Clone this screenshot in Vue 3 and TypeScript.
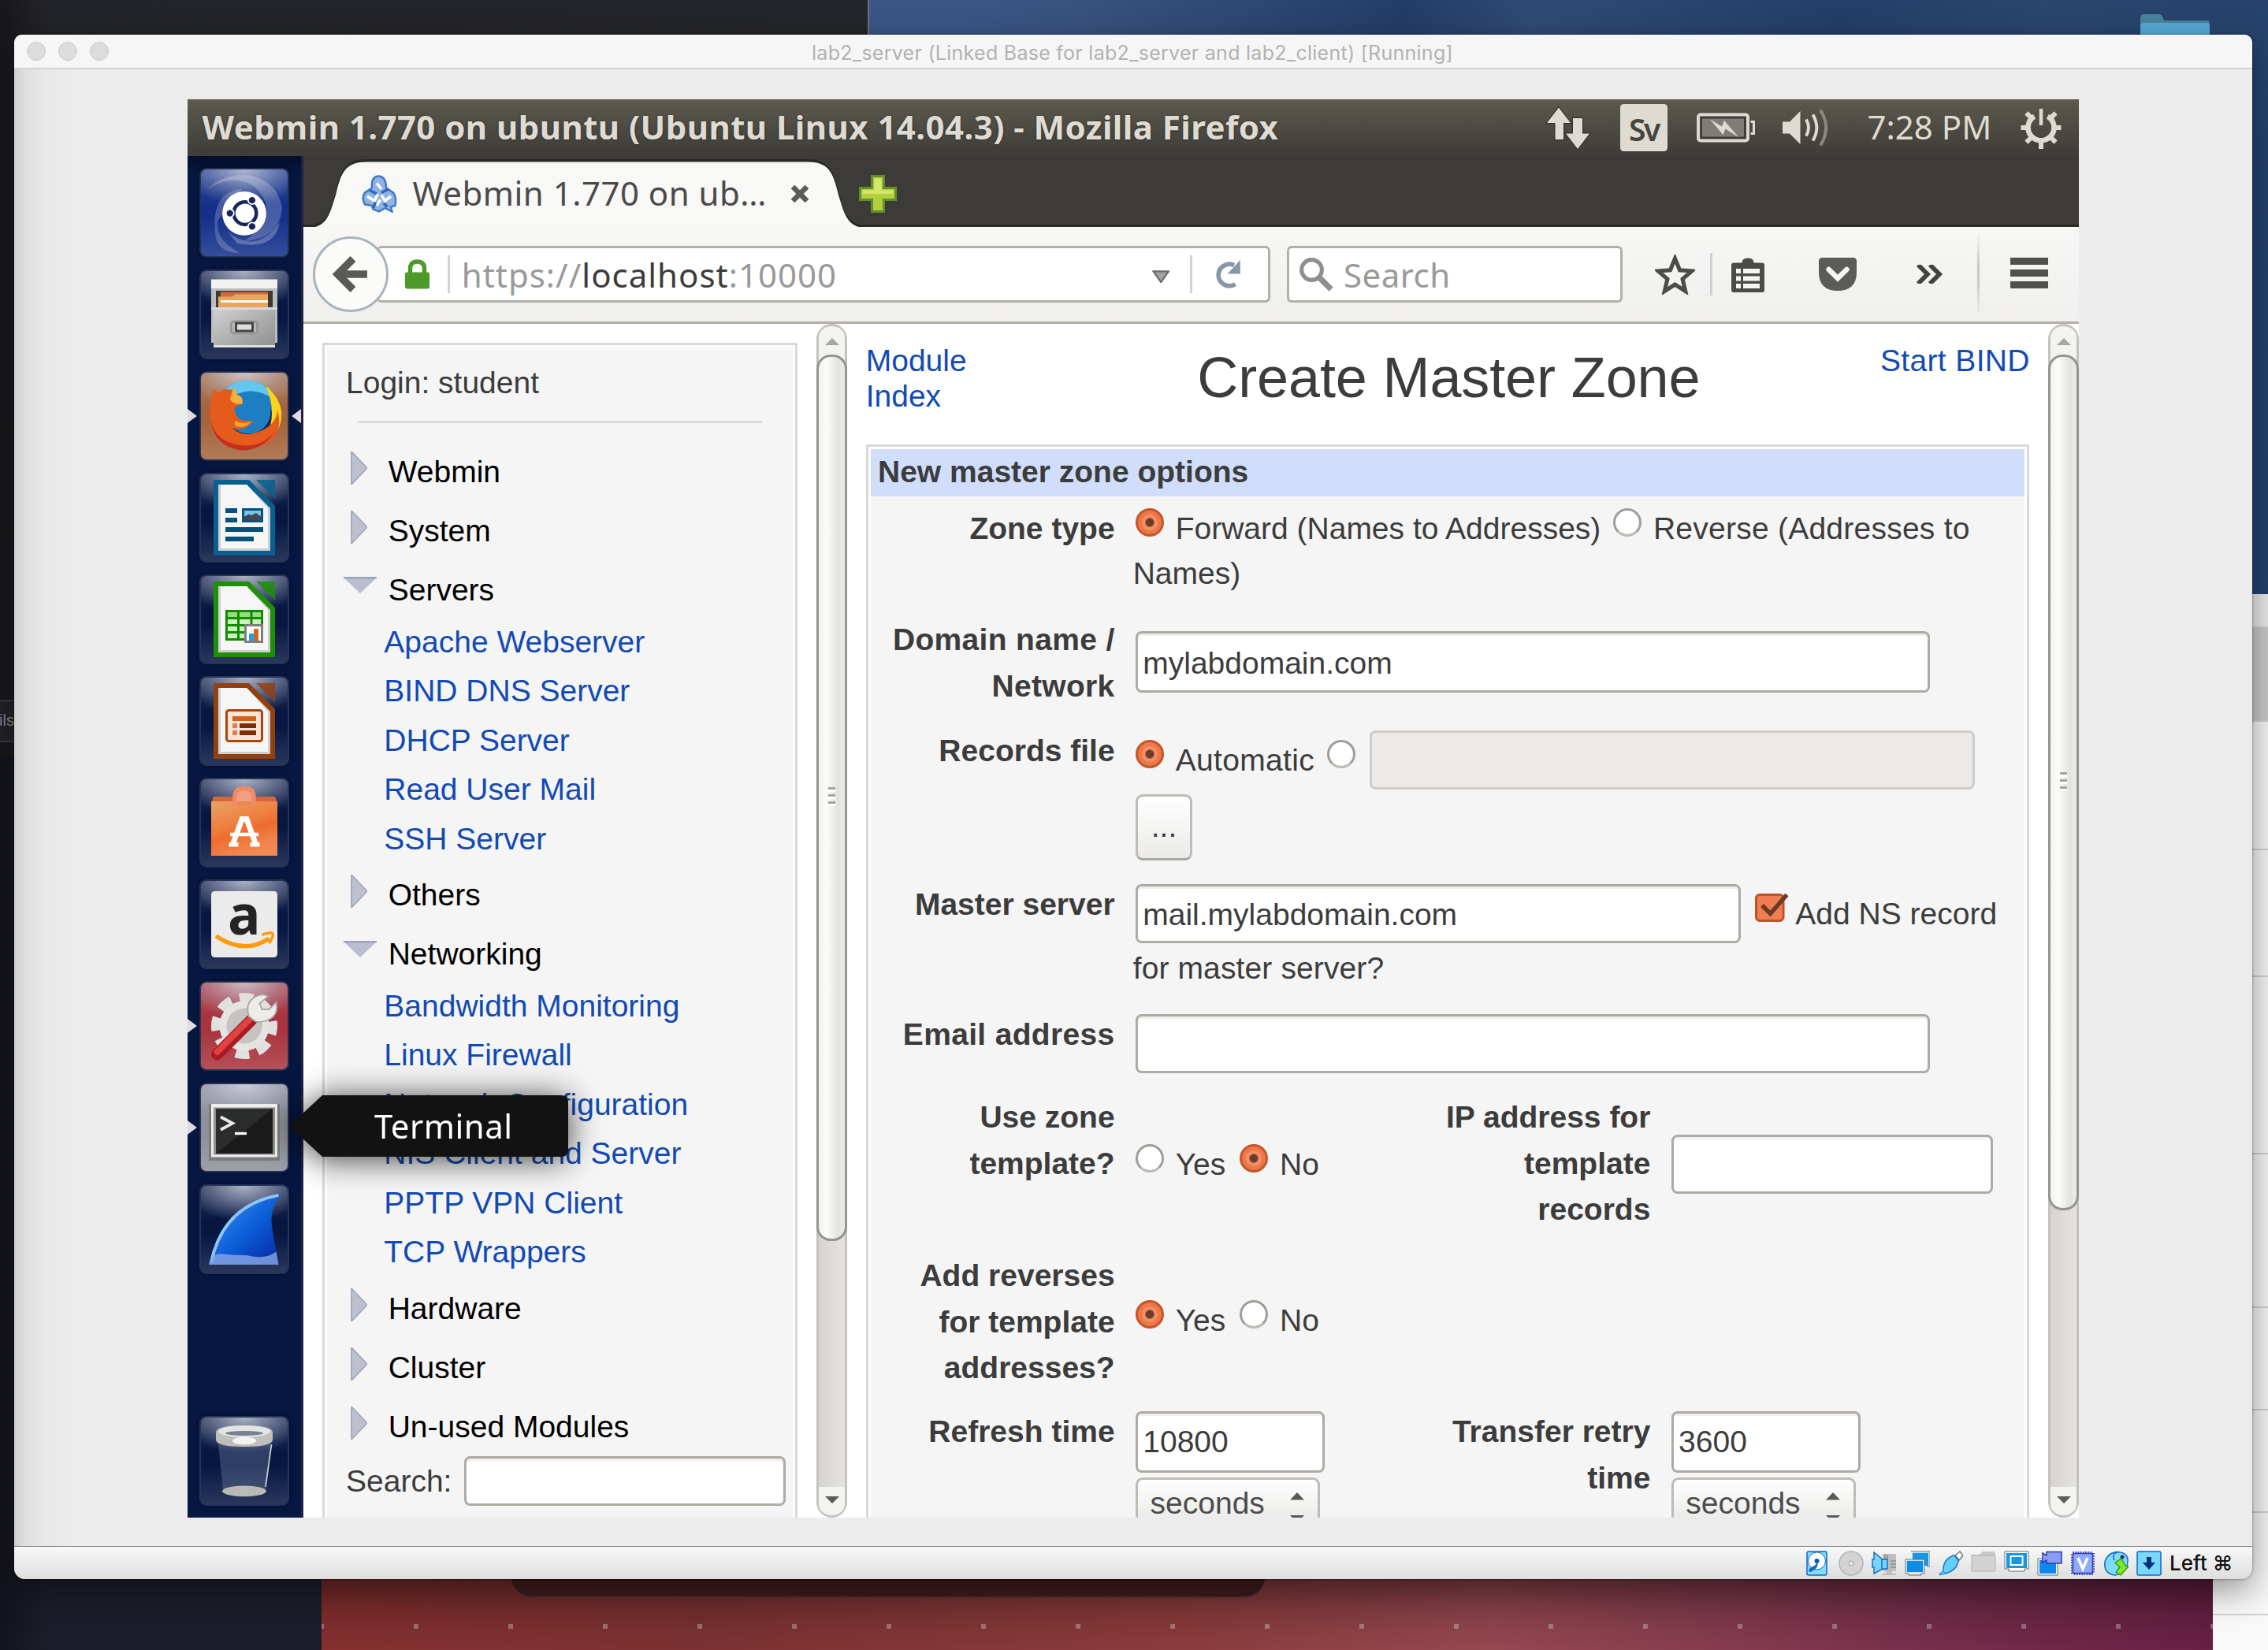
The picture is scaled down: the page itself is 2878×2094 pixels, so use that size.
<script setup lang="ts">
interface Category {
  name: string
  links?: string[]
}

const categories: Category[] = [
  { name: 'Webmin' },
  { name: 'System' },
  {
    name: 'Servers',
    links: ['Apache Webserver', 'BIND DNS Server', 'DHCP Server', 'Read User Mail', 'SSH Server'],
  },
  { name: 'Others' },
  {
    name: 'Networking',
    links: [
      'Bandwidth Monitoring',
      'Linux Firewall',
      'Network Configuration',
      'NIS Client and Server',
      'PPTP VPN Client',
      'TCP Wrappers',
    ],
  },
  { name: 'Hardware' },
  { name: 'Cluster' },
  { name: 'Un-used Modules' },
]

const launchers: { id: string; running?: boolean; focused?: boolean }[] = [
  { id: 'dash' },
  { id: 'files' },
  { id: 'firefox', running: true, focused: true },
  { id: 'writer' },
  { id: 'calc' },
  { id: 'impress' },
  { id: 'software' },
  { id: 'amazon' },
  { id: 'settings', running: true },
  { id: 'terminal', running: true },
  { id: 'wireshark' },
  { id: 'trash' },
]
</script>

<template>
  <div class="desktop">
    <div class="bg-terminal"></div>
    <svg class="folder" viewBox="0 0 90 30" width="90" height="30">
      <path d="M1 30V5q0-5 5-5h18q4 0 5 3l2 5h55q3 0 3 4v18z" fill="#4a829d" />
      <path d="M1 30V15q0-4 4-4h80q4 0 4 4v15z" fill="#54aad6" />
    </svg>
    <div class="side-list">
      <i class="sl-head"></i>
      <i class="sl-sel"></i>
      <i class="sl-row r163"></i>
      <i class="sl-row r161"></i>
      <i class="sl-row r225"></i>
      <i class="sl-row r195"></i>
      <i class="sl-row r130"></i>
      <i class="sl-row r130"></i>
      <i class="sl-row r130"></i>
    </div>
    <div class="left-scrap"><span>ils</span></div>
    <div class="purple">
      <div class="dock"></div>
      <div class="dots"><i v-for="n in 21" :key="n"></i></div>
    </div>

    <div class="window">
      <header class="titlebar">
        <div class="lights"><i></i><i></i><i></i></div>
        <span class="wtitle">lab2_server (Linked Base for lab2_server and lab2_client) [Running]</span>
      </header>

      <main class="stage">
        <div class="vm">
          <div class="panel">
            <span class="ptitle">Webmin 1.770 on ubuntu (Ubuntu Linux 14.04.3) - Mozilla Firefox</span>
            <svg class="p-net" width="20" height="20" viewBox="0 0 20 20">
              <g fill="#dfdbd2" stroke="#33322e" stroke-width=".8" paint-order="stroke">
                <path d="M6 1.5l5 6.5H8v7H4.500V8H1z" />
                <path d="M14 19l5-6.500h-3V6h-4v6.500H9z" />
              </g>
            </svg>
            <span class="p-sv">Sv</span>
            <svg class="p-bat" width="26" height="14" viewBox="0 0 26 14">
              <rect x="1" y="1.500" width="21" height="11" rx="1" fill="#7f7d76" stroke="#dfdbd2" stroke-width="1.300" />
              <rect x="2.200" y="2.700" width="18.600" height="8.600" fill="none" stroke="#3b3a36" stroke-width=".9" />
              <path d="M23.200 4.500h1.300v5h-1.300" fill="none" stroke="#dfdbd2" stroke-width="1" />
              <path d="M6 3.500l5 3 1-2.500 6 7-5.500-3.500-1 2.500z" fill="#dfdbd2" />
            </svg>
            <svg class="p-vol" width="20" height="18" viewBox="0 0 20 18">
              <path d="M0 6.500h3L7.500 2v14L3 11.500H0z" fill="#dfdbd2" />
              <g fill="none" stroke="#dfdbd2" stroke-width="1.300">
                <path d="M10 5.500q2 3.500 0 7" />
                <path d="M12.800 3.500q3.300 5.500 0 11" />
                <path d="M16 1.500q4.800 7.500 0 15" stroke="#8b8880" />
              </g>
            </svg>
            <span class="p-clock">7:28 PM</span>
            <svg class="p-gear" width="18" height="18" viewBox="0 0 18 18">
              <g fill="none" stroke="#dfdbd2">
                <path d="M6.200 4.200a5.500 5.500 0 1 0 5.600 0" stroke-width="2.200" />
                <path d="M9 1v7" stroke-width="1.500" />
                <path d="M9 14.500V18M.5 9H3.500M14.500 9h3M2.800 2.800l2 2M15.200 2.800l-2 2M2.800 15.200l2-2M15.200 15.200l-2-2" stroke-width="2" />
              </g>
            </svg>
          </div>

          <div class="vbody">
            <nav class="launcher">
              <div v-for="l in launchers" :key="l.id" class="slot" :class="l.id">
                <i v-if="l.running" class="run"></i>
                <i v-if="l.focused" class="foc"></i>
                <svg class="app" width="38" height="38" viewBox="0 0 38 38">
                  <g v-if="l.id === 'dash'">
                    <path d="M3 10C10 3 24 3 28 15q2 8-9 16Q34 30 35 17 33 5 20 3 8 3 3 10z" fill="#fff" opacity=".22" />
                    <path d="M7 30Q4 10 18 9L8 22q-2 8 9 14-8 0-10-6z" fill="#fff" opacity=".2" />
                    <path d="M12 27q12 10 22-4-2 12-18 9z" fill="#fff" opacity=".25" />
                    <circle cx="19" cy="19.300" r="9.300" fill="#fff" />
                    <circle cx="19.300" cy="19.200" r="4.800" fill="none" stroke="#16265c" stroke-width="1.500" />
                    <g fill="#16265c" stroke="#fff" stroke-width=".6">
                      <circle cx="12.900" cy="19.200" r="1.700" />
                      <circle cx="22.300" cy="13.700" r="1.700" />
                      <circle cx="22.300" cy="24.800" r="1.700" />
                    </g>
                  </g>
                  <g v-else-if="l.id === 'files'">
                    <path d="M5 4.500h28V31H5z" fill="#bdbdbd" />
                    <path d="M5 4.200h28V8H5z" fill="#f1f1f1" />
                    <path d="M7 9h24v8H7z" fill="#3d3a38" />
                    <path d="M9 9.500h20V17H8.500z" fill="#cf6a3c" />
                    <path d="M8 11.500h6l1-1h14V17H8z" fill="#eba55a" />
                    <path d="M9 13h20v1H9z" fill="#fff" />
                    <path d="M6 16h26v17H6z" fill="url(#steel)" />
                    <path d="M5 16h28v1H5z" fill="#d9d9d9" />
                    <path d="M6 32h26v1H6z" fill="#e0e0e0" />
                    <rect x="13.500" y="22" width="11" height="5" rx="1" fill="#b9b9b9" stroke="#989898" />
                    <rect x="15.500" y="22.700" width="7" height="3.300" fill="#ddd" stroke="#444" stroke-width="1" />
                  </g>
                  <g v-else-if="l.id === 'firefox'">
                    <circle cx="20" cy="17.500" r="13.500" fill="#1d7fc1" />
                    <path d="M8 12Q12 4 20 4t12 8q-8-5-14-3z" fill="#62c8f0" />
                    <path d="M12 20q3 8 12 6 7-3 6-11 4 14-8 15-9 0-10-10z" fill="#10225c" />
                    <path d="M28 6q9 8 6 17-4 10-15 10 9-3 11-10 2-8-2-17z" fill="#fbd51c" />
                    <path d="M6 7.500L8 9q3-2 6-1l2-1q-1 2 0 3 3 1 2 4-4 1-3 3 1 5 8 4-4 5-9 3 4 4 10 2 9-3 9-10 4 15-13 17Q4 32 4.500 18q0-6 1.500-10.500z" fill="#e55b1c" />
                    <path d="M4.600 20q2 11 15 11.500 8 0 12-6-4 8-14 8Q6 32 4.600 20z" fill="#c42f1e" />
                    <path d="M14 8l2-1q-1 2 0 3 3 1 2 4-4 0-5-2z" fill="#f6b03c" />
                    <path d="M15 21q4 2 7 0-3 4-7 2z" fill="#f9a52b" />
                  </g>
                  <g v-else-if="l.id === 'writer' || l.id === 'calc' || l.id === 'impress'">
                    <path class="doc" d="M6 3h15l11 11v21H6z" />
                    <path class="doc" d="M24 3h8v8z" opacity=".85" />
                    <path d="M8 5h12l10 10v18H8z" fill="#cfcfcf" />
                    <path d="M9 5h11l9 10v17H9z" fill="#f6f6f6" />
                    <g v-if="l.id === 'writer'" fill="#05507c">
                      <path d="M11 15h5v2h-5zM11 19h5v2h-5zM11 23h16v2H11zM11 27h12v2H11zM18 15h9v6h-9z" />
                      <path d="M19 16h7v4h-7z" fill="#74c4ec" />
                      <path d="M19 18.500l2-1 1 .5 2-1 2 1.500V20h-7z" fill="#445" />
                    </g>
                    <g v-else-if="l.id === 'calc'">
                      <path d="M11 15h16v13H11z" fill="#148b02" />
                      <path d="M12 16h4v2h-4zM17 16h4.500v2H17zM22.500 16H26v2h-3.500z" fill="#92df80" />
                      <path d="M12 19h4v2h-4zM17 19h4.500v2H17zM22.500 19H26v2h-3.500zM12 22h4v2h-4zM17 22h4v2h-4zM12 25h4v2h-4zM17 25h3v2h-3z" fill="#c8f3bd" />
                      <path d="M19.500 21.500h7v7h-7z" fill="#fff" stroke="#7e7e7e" />
                      <path d="M21 25h2v3h-2z" fill="#21a0ea" />
                      <path d="M23 23h2v5h-2z" fill="#d9651a" />
                    </g>
                    <g v-else>
                      <rect x="11.500" y="14.500" width="15" height="13" rx="1" fill="#fbe3d6" stroke="#a8460b" />
                      <path d="M14 17h10v2H14z" fill="#d0621c" />
                      <path d="M17 20h7v2h-7zM17 23h7v2h-7z" fill="#7d2f04" />
                      <path d="M14 20h2v2h-2zM14 23h2v2h-2z" fill="#dd8149" />
                    </g>
                  </g>
                  <g v-else-if="l.id === 'software'">
                    <path d="M6 8h26l1 3H5z" fill="#d8663b" />
                    <path d="M5 10h28v23H5z" fill="url(#bag)" />
                    <path d="M15 12V8q0-3.500 4-3.500t4 3.500v4" fill="#f0a184" stroke="#ef8a68" stroke-width="1.800" />
                    <path d="M16 10h6v2h-6z" fill="#e98a4f" />
                    <g fill="none" stroke="#fff" stroke-width="2.300">
                      <path d="M14 28.500l4-11h2l4 11" />
                      <path d="M13 24h12" stroke-width="1.500" />
                      <path d="M12.500 28.300h4M21.500 28.300h4" stroke-width="1.800" />
                    </g>
                  </g>
                  <g v-else-if="l.id === 'amazon'">
                    <rect x="5" y="5" width="28" height="28" rx="1.500" fill="#ebebeb" />
                    <path d="M7 24q12 8 22.500 1" fill="none" stroke="#ff9a0c" stroke-width="1.800" />
                    <path d="M26.500 23.500q4-1.500 4.500-.5t-1.500 4" fill="none" stroke="#ff9a0c" stroke-width="1.200" />
                  </g>
                  <g v-else-if="l.id === 'settings'">
                    <circle cx="19" cy="19" r="11.500" fill="none" stroke="#e2e0df" stroke-width="5" stroke-dasharray="5.500 3.530" stroke-dashoffset="2" />
                    <circle cx="19" cy="19" r="8.500" fill="#d5d3d2" stroke="#e6e4e3" stroke-width="4" />
                    <circle cx="19" cy="19" r="7.500" fill="#c6c4c3" />
                    <path d="M7.500 31L22 16.500" stroke="#a81c26" stroke-width="5" stroke-linecap="round" />
                    <path d="M7.500 30L21 16.500" stroke="#e0423f" stroke-width="2.600" stroke-linecap="round" />
                    <path d="M21 15q-2-6 3-8.500 3-1.500 5 0l-3.500 3 1 2.500 3 0 3-3q1 5-2.500 7-4 2-6.500 1z" fill="#eeecea" stroke="#a9a7a5" stroke-width=".6" />
                  </g>
                  <g v-else-if="l.id === 'terminal'">
                    <path d="M4 9h30v24H4z" fill="#7b7b79" />
                    <path d="M5 9h28v22.500H5z" fill="#eeeeed" />
                    <path d="M6 10.500h26v20H6z" fill="#8f8f8f" />
                    <path d="M7 11h24v19H7z" fill="#2b2c2c" />
                    <path d="M31 11v19H7z" fill="#0e0f0f" opacity=".55" />
                    <path d="M9 14.500l5 2.700-5 2.700" fill="none" stroke="#e8e8e8" stroke-width="1.300" />
                    <path d="M15 21.500h5" stroke="#fff" stroke-width="1.100" />
                  </g>
                  <g v-else-if="l.id === 'wireshark'">
                    <path d="M35 4q-6 6-4 16l2.500 14H4Q10 8 35 4z" fill="url(#fin)" />
                    <path d="M33.500 4.600Q10 9 5 33" fill="none" stroke="#8fc4fa" stroke-width="1.300" />
                    <path d="M4 34q1-5 6-4.500t10 .5q8 2 12.500-1.500l1 5.500z" fill="#87a8e6" opacity=".8" />
                  </g>
                  <g v-else>
                    <path d="M8 12l2 19q9 4 18 0l2.500-19z" fill="#8e9bb8" opacity=".3" />
                    <path d="M30.500 12L28 30" stroke="#c6cbd6" stroke-width=".6" />
                    <ellipse cx="19" cy="31.800" rx="9.300" ry="2.300" fill="#b9bab6" />
                    <path d="M7 7v3q0 3 12 3t12-3V7q0-3-12-3T7 7z" fill="#bfc0be" />
                    <ellipse cx="19" cy="6.500" rx="11" ry="2.500" fill="#e4e5e2" />
                    <ellipse cx="19" cy="7.300" rx="8" ry="1" fill="#76828f" />
                    <ellipse cx="19" cy="10.500" rx="5" ry="1.600" fill="#f4f4f2" />
                  </g>
                </svg>
                <b v-if="l.id === 'amazon'" class="a-letter">a</b>
              </div>
              <svg class="defs" width="0" height="0">
                <linearGradient id="steel" x1="0" y1="0" x2="1" y2="1">
                  <stop offset="0" stop-color="#d2d2d2" />
                  <stop offset="1" stop-color="#8e8e8e" />
                </linearGradient>
                <linearGradient id="bag" x1="0" y1="0" x2=".4" y2="1">
                  <stop offset="0" stop-color="#e9a366" />
                  <stop offset=".5" stop-color="#ef7c3d" />
                  <stop offset=".65" stop-color="#ef6c2f" />
                  <stop offset="1" stop-color="#f38850" />
                </linearGradient>
                <linearGradient id="fin" x1="0" y1="0" x2="1" y2="1">
                  <stop offset=".2" stop-color="#2f86ea" />
                  <stop offset=".55" stop-color="#0b5ad6" />
                  <stop offset="1" stop-color="#04249a" />
                </linearGradient>
              </svg>
            </nav>

            <section class="browser">
              <div class="tabs">
                <div class="tab">
                  <svg class="tabshape" width="238" height="30" viewBox="0 0 238 30">
                    <path d="M0 30C9 30 10 25 12.500 16 15 6 17 2 26 2H212C221 2 223 6 225.500 16 228 25 229 30 238 30z" fill="#2a2926" transform="translate(0,-.7)" />
                    <path d="M0 30.500C9 30.500 10 25 12.800 16 15 6.500 17 2.500 26 2.500H212C221 2.500 223 6.500 225.200 16 228 25 229 30.500 238 30.500z" fill="#f8f8f7" />
                  </svg>
                  <svg class="fav" width="16" height="16" viewBox="0 0 16 16">
                    <path d="M5 5.500Q4.500 1 7.500.5q3.500 0 3.500 5l3 2q1.500 2 .8 5.500l-1.800.5.5 2-3-1.500-2.500 1.500-2.500-1-.5-1.500-3-.5Q.5 9.500 2 7.500z" fill="#8fb4e4" stroke="#3f76c6" stroke-width=".8" />
                    <g fill="none" stroke="#fff" stroke-width="1.200">
                      <path d="M7 3.500l2 2.500M3 9l3 2 1.500-3M9 8.500l1.500 2.500 2.500-2M7 13l1.500-2.500" />
                    </g>
                    <path d="M4 6.500l3 1.500M9 7.500l3-1.500M6.500 11.500l-1 2.500M10 12l1.500 1.500" stroke="#3066ba" stroke-width="1.200" />
                  </svg>
                  <span class="ttext">Webmin 1.770 on ub…</span>
                  <svg class="tclose" width="8" height="8" viewBox="0 0 8 8"><path d="M1 1l6 6M7 1L1 7" stroke="#5b5b59" stroke-width="2.200" /></svg>
                </div>
                <svg class="plus" width="16" height="16" viewBox="0 0 16 16">
                  <path d="M5.500.5h5v5h5v5h-5v5h-5v-5h-5v-5h5z" fill="#b3cf3d" stroke="#628f2b" />
                  <path d="M6.500 1.500h3v5h5v1.500h-13V6.500h5z" fill="#d8e56c" />
                </svg>
              </div>

              <div class="navbar">
                <div class="back">
                  <svg width="16" height="16" viewBox="0 0 16 16"><path d="M15 8H4M9 1.500L2.500 8 9 14.500" fill="none" stroke="#5a5a58" stroke-width="3.200" /></svg>
                </div>
                <div class="url">
                  <svg class="lock" width="11" height="13" viewBox="0 0 11 13">
                    <path d="M2.500 6V4q0-3 3-3t3 3v2" fill="none" stroke="#4c9a2a" stroke-width="1.800" />
                    <rect x=".3" y="5.500" width="10.400" height="7" rx=".8" fill="#4c9a2a" />
                  </svg>
                  <i class="vsep"></i>
                  <span class="utext">https://<em>localhost</em>:10000</span>
                  <svg class="drop" width="7.500" height="5.500" viewBox="0 0 8 6"><path d="M.5.500h7L4 5.500z" fill="#a2a2a0" stroke="#6a6a68" stroke-width=".8" /></svg>
                  <i class="vsep"></i>
                  <svg class="reload" width="12" height="12" viewBox="0 0 12 12">
                    <path d="M9.500 10.200A4.600 4.600 0 1 1 9 2.200" fill="none" stroke="#8797a6" stroke-width="1.900" />
                    <path d="M11.600 0v5.800H6.200z" fill="#8797a6" />
                  </svg>
                </div>
                <div class="sbox">
                  <svg width="15" height="15" viewBox="0 0 15 15"><circle cx="5.500" cy="5.500" r="4.300" fill="none" stroke="#8f8f8d" stroke-width="1.700" /><path d="M8.700 8.700l5 5" stroke="#8f8f8d" stroke-width="2.400" /></svg>
                  <span>Search</span>
                </div>
                <svg class="n-star" width="17" height="17" viewBox="0 0 17 17"><path d="M8.500 1.700l2 4.900 5.100.4-3.900 3.400 1.200 5.100-4.400-2.800-4.400 2.800 1.200-5.100L1.400 7l5.100-.4z" fill="none" stroke="#4b4b49" stroke-width="1.700" /></svg>
                <i class="vsep n-s1"></i>
                <svg class="n-clip" width="14" height="15" viewBox="0 0 14 15">
                  <path d="M0 3.500q0-1 1-1h3.500q0-2 2.500-2t2.500 2H13q1 0 1 1V14q0 1-1 1H1q-1 0-1-1z" fill="#4b4b49" />
                  <path d="M2 5h2v2H2zM5 5h7v2H5zM2 8.200h2v2H2zM5 8.200h7v2H5zM2 11.300h2v2H2zM5 11.300h7v2H5z" fill="#f6f6f5" />
                </svg>
                <svg class="n-pocket" width="16" height="14" viewBox="0 0 16 14">
                  <path d="M0 1.500Q0 0 1.500 0h13Q16 0 16 1.500V6q0 8-8 8T0 6z" fill="#5b5b59" />
                  <path d="M4.200 5L8 8.700 11.800 5" fill="none" stroke="#f6f6f5" stroke-width="2.200" stroke-linecap="round" />
                </svg>
                <svg class="n-more" width="12" height="8" viewBox="0 0 12 8"><path d="M1 0l4 4-4 4M6 0l4 4-4 4" fill="none" stroke="#424240" stroke-width="1.900" /></svg>
                <i class="n-s2"></i>
                <svg class="n-menu" width="16" height="13" viewBox="0 0 16 13"><path d="M0 1.500h16M0 6.500h16M0 11.500h16" stroke="#4f4f4d" stroke-width="3" /></svg>
              </div>

              <div class="frames">
                <aside class="left">
                  <div class="lbox">
                    <div class="login">Login: student</div>
                    <hr />
                    <template v-for="c in categories" :key="c.name">
                      <div class="cat">
                        <svg v-if="c.links" class="down" width="14" height="7" viewBox="0 0 14 7"><path d="M0 .3h14L7 7z" fill="#b9bdcd" /><path d="M0 .4h14" stroke="#9298b0" stroke-width=".7" /></svg>
                        <svg v-else class="right" width="7" height="14" viewBox="0 0 7 14"><path d="M.3 0v14L7 7z" fill="#bdc0ce" stroke="#9ca2ba" stroke-width=".5" /></svg>
                        <span>{{ c.name }}</span>
                      </div>
                      <ul v-if="c.links" class="links">
                        <li v-for="k in c.links" :key="k">{{ k }}</li>
                      </ul>
                    </template>
                    <div class="find"><span>Search:</span><div class="field"></div></div>
                  </div>
                </aside>
                <div class="sb sb-left">
                  <div class="sbtn"><svg width="6" height="3" viewBox="0 0 6 3"><path d="M0 3h6L3 0z" fill="#a9a7a3" /></svg></div>
                  <div class="thumb"><i></i><i></i><i></i></div>
                  <div class="sbtn low"><svg width="6" height="3" viewBox="0 0 6 3"><path d="M0 0h6L3 3z" fill="#5c5b58" /></svg></div>
                </div>

                <article class="main">
                  <div class="head">
                    <div class="mi">Module<br />Index</div>
                    <h1>Create Master Zone</h1>
                    <div class="sbind">Start BIND</div>
                  </div>
                  <div class="form">
                    <div class="fhead">New master zone options</div>
                    <div class="frow h47">
                      <label>Zone type</label>
                      <div class="val">
                        <div class="ln"><i class="radio on"></i><span>Forward (Names to Addresses)</span><i class="radio nx"></i><span class="rev">Reverse (Addresses to</span></div>
                        <div class="under">Names)</div>
                      </div>
                    </div>
                    <div class="frow h47">
                      <label class="wide">Domain name /<br />Network</label>
                      <div class="val"><div class="field dom">mylabdomain.com</div></div>
                    </div>
                    <div class="frow h65">
                      <label>Records file</label>
                      <div class="val">
                        <div class="ln d4"><i class="radio on"></i><span class="auto">Automatic</span><i class="radio nx"></i><div class="field dis"></div></div>
                        <div class="btn">...</div>
                      </div>
                    </div>
                    <div class="frow h55">
                      <label>Master server</label>
                      <div class="val">
                        <div class="ln d4">
                          <div class="field mas">mail.mylabdomain.com</div>
                          <svg class="check" width="15" height="14" viewBox="0 0 15 14">
                            <rect x=".5" y="1.500" width="11.500" height="11" rx="1.500" fill="#f07e50" stroke="#c05228" />
                            <path d="M3 6l3.500 3.500L13.500 1.500" fill="none" stroke="#6d3a28" stroke-width="1.800" />
                          </svg>
                          <span class="ns">Add NS record</span>
                        </div>
                        <div class="under m2">for master server?</div>
                      </div>
                    </div>
                    <div class="frow h35">
                      <label class="wide">Email address</label>
                      <div class="val"><div class="field mail"></div></div>
                    </div>
                    <div class="frow h67">
                      <label>Use zone<br />template?</label>
                      <div class="val half"><div class="ln d20"><i class="radio"></i><span>Yes</span><i class="radio on nx"></i><span>No</span></div></div>
                      <label class="l2">IP address for<br />template<br />records</label>
                      <div class="val"><div class="field ip"></div></div>
                    </div>
                    <div class="frow h66">
                      <label>Add reverses<br />for template<br />addresses?</label>
                      <div class="val half"><div class="ln d19"><i class="radio on"></i><span>Yes</span><i class="radio nx"></i><span>No</span></div></div>
                    </div>
                    <div class="frow h66">
                      <label>Refresh time</label>
                      <div class="val half">
                        <div class="field num">10800</div>
                        <div class="select"><span>seconds</span><svg width="6" height="14" viewBox="0 0 6 14"><path d="M0 3.500h6L3 .3zM0 10h6L3 13.200z" fill="#5a5956" /></svg></div>
                      </div>
                      <label class="l2">Transfer retry<br />time</label>
                      <div class="val">
                        <div class="field num">3600</div>
                        <div class="select"><span>seconds</span><svg width="6" height="14" viewBox="0 0 6 14"><path d="M0 3.500h6L3 .3zM0 10h6L3 13.200z" fill="#5a5956" /></svg></div>
                      </div>
                    </div>
                  </div>
                </article>
                <div class="sb sb-right">
                  <div class="sbtn"><svg width="6" height="3" viewBox="0 0 6 3"><path d="M0 3h6L3 0z" fill="#a9a7a3" /></svg></div>
                  <div class="thumb"><i></i><i></i><i></i></div>
                  <div class="sbtn low"><svg width="6" height="3" viewBox="0 0 6 3"><path d="M0 0h6L3 3z" fill="#5c5b58" /></svg></div>
                </div>
              </div>
            </section>
          </div>

          <div class="tip">
            <svg width="118" height="26" viewBox="0 0 118 26"><path d="M0 13L14 0H115q3 0 3 3v20q0 3-3 3H14z" fill="#121212" /></svg>
            <span>Terminal</span>
          </div>
        </div>
      </main>

      <footer class="status">
        <svg width="32" height="32" viewBox="0 0 32 32">
          <rect x="2" y="1" width="25" height="30" rx="2" fill="#7fdcfb" stroke="#1666c8" stroke-width="1.500" />
          <circle cx="14.500" cy="13" r="11" fill="#fff" stroke="#1666c8" /><circle cx="14.500" cy="13" r="3" fill="#0a56b8" />
          <path d="M15 14q3 8-9 13-3-1-1-4 5-4 7-4z" fill="#1463c4" />
        </svg>
        <svg width="32" height="32" viewBox="0 0 32 32"><circle cx="16" cy="16" r="15" fill="#d3d3d3" stroke="#b4b4b4" stroke-width="1.500" /><circle cx="16" cy="16" r="3" fill="#e8e8e8" stroke="#a2a2a2" /></svg>
        <svg width="32" height="32" viewBox="0 0 32 32">
          <path d="M14 4h15q2 0 2 2v18q0 2-2 2h-3v3h5v2H13v-2h6v-3h-5z" fill="#bdbdbd" />
          <path d="M17 5v6M20 5v6M24 13h7M24 17h7M24 21h7" stroke="#8d8d8d" stroke-width="1.500" />
          <path d="M3 2l11 9h6v12h-6L3 29V21H1V11h2z" fill="#79d6fa" stroke="#1b6cc9" stroke-width="1.500" /><path d="M13 11v12" stroke="#1b6cc9" stroke-width="1.500" />
        </svg>
        <svg width="32" height="32" viewBox="0 0 32 32">
          <g stroke="#fff" stroke-width="1.500"><path d="M9 2h22v18H9z" fill="#1597e6" /><path d="M2 12h22v16H2z" fill="#0e8be8" /></g>
          <path d="M8 1h24v19h-4M1 11h24v18h-4v2H5v-2H1z" fill="none" stroke="#6b6b6b" />
        </svg>
        <svg width="32" height="32" viewBox="0 0 32 32">
          <path d="M22 6l6-5 4 5-5 6z" fill="#fff" stroke="#777" stroke-width="1.500" />
          <path d="M18 7q2-2 4 0l4 5q1 2-1 4-2 9-15 13l-3-2Q6 12 18 7z" fill="#62d0fb" stroke="#1b73cc" stroke-width="1.500" /><path d="M7 26l-5 3 1 2 6-2" fill="#62d0fb" stroke="#1b73cc" />
        </svg>
        <svg width="32" height="32" viewBox="0 0 32 32"><path d="M1 5h10l4-4h14l2 2v22H1z" fill="#c7c7c7" /><path d="M1 6h30v20H1z" fill="#d3d3d3" stroke="#b1b1b1" /></svg>
        <svg width="32" height="32" viewBox="0 0 32 32">
          <path d="M1 1h30v22h-5v3H6v-3H1z" fill="#fff" stroke="#6b6b6b" /><path d="M3 3h26v19H3z" fill="#1597e6" /><path d="M8.500 7h15v11h-15z" fill="#1597e6" stroke="#fff" stroke-width="2" />
        </svg>
        <svg width="32" height="32" viewBox="0 0 32 32">
          <path d="M1 10h25v21H1z" fill="#fff" stroke="#6b6b6b" /><path d="M3 12h21v17H3z" fill="#0d87ee" />
          <path d="M7 3l5 3V1.500h19V16H12v-4l-5 3z" fill="#8a9bf3" stroke="#2c3fae" stroke-width="1.500" />
        </svg>
        <svg width="32" height="32" viewBox="0 0 32 32">
          <rect x="3" y="3" width="26" height="26" fill="none" stroke="#2d3fb8" stroke-width="4" stroke-dasharray="1.600 1.650" />
          <rect x="3.500" y="3.500" width="25" height="25" rx="2" fill="#8fa9fb" stroke="#2d3fb8" stroke-width="1.500" />
          <path d="M10 9l6 14 6-14" fill="none" stroke="#fff" stroke-width="3.500" />
        </svg>
        <svg width="32" height="32" viewBox="0 0 32 32">
          <path d="M2 14Q6 2 18 1.500q14 1 13 12-1 16-16 17.500Q0 29 2 14z" fill="#7ddcfb" stroke="#1b6cc9" stroke-width="1.500" />
          <path d="M14 12q-4-8 4-10" fill="none" stroke="#1b6cc9" stroke-width="1.500" /><circle cx="24" cy="8" r="2.500" fill="#0a2d6c" />
          <path d="M15 15l8-5 5 9 4 1-10 11-6-4 5-6z" fill="#7bea22" stroke="#38930d" stroke-width="1.300" />
        </svg>
        <svg width="32" height="32" viewBox="0 0 32 32"><rect x="1" y="1" width="30" height="30" rx="2" fill="#79d8fb" stroke="#1666c8" stroke-width="1.500" /><path d="M13 8h6v7h5l-8 9-8-9h5z" fill="#062f7c" /></svg>
        <span class="host">Left ⌘</span>
      </footer>
    </div>
  </div>
</template>

<style>
body {
  overflow: hidden;
  background: #1b1d2a;
}
</style>

<style scoped>
.desktop {
  position: relative;
  width: 2878px;
  height: 2094px;
  overflow: hidden;
  background: linear-gradient(100deg, #3a5586 38%, #39527f 42%, #243d68 55%, #304a75 60%, #243e69 72%, #2b456e 80%, #22416c 95%, #2c4363);
}
.bg-terminal {
  position: absolute;
  left: 0;
  top: 0;
  width: 1101px;
  height: 2094px;
  background: linear-gradient(90deg, #17171a, #232429 60px, #25262b);
  border-right: 2px solid #6c7079;
}
.bg-terminal::after {
  content: '';
  position: absolute;
  left: 0;
  top: 960px;
  width: 408px;
  height: 1134px;
  background: linear-gradient(90deg, #12131c, #1b1d2a 60px);
}
.folder { position: absolute; left: 2715px; top: 18px; }
.side-list {
  position: absolute;
  right: 0;
  top: 754px;
  width: 70px;
  height: 1340px;
  display: flex;
  flex-direction: column;
  background: #f8f8f8;
}
.side-list i { display: block; flex: none; box-sizing: border-box; border-bottom: 2px solid #d2d2d2; }
.sl-head { height: 43px; background: #ececec; }
.sl-sel { height: 119px; background: #cbcbcb; }
.r163 { height: 163px; }
.r161 { height: 161px; }
.r225 { height: 225px; }
.r195 { height: 195px; }
.r130 { height: 130px; }
.left-scrap {
  position: absolute;
  left: 0;
  top: 888px;
  width: 18px;
  height: 50px;
  background: #222327;
  border-top: 2px solid #3a3b3f;
  border-bottom: 2px solid #3a3b3f;
  overflow: hidden;
  font: 20px/48px 'Liberation Sans', sans-serif;
  color: #85868a;
}
.left-scrap span { margin-left: -1px; }
.purple {
  position: absolute;
  left: 408px;
  top: 1980px;
  width: 2400px;
  height: 114px;
  overflow: hidden;
  background: linear-gradient(90deg, #86302f, #7c3232 20%, #8b3c3b 45%, #954850 62%, #853b50 75%, #732b49 88%, #682044);
}
.purple::after {
  content: '';
  position: absolute;
  inset: 0;
  background: linear-gradient(180deg, rgba(0, 0, 0, 0.22) 20%, transparent);
}
.dock {
  position: absolute;
  left: 241px;
  top: 0;
  width: 956px;
  height: 48px;
  border-radius: 0 0 26px 26px;
  background: #4a2022;
  border-bottom: 2px solid #6a3a3b;
  box-sizing: border-box;
}
.dots {
  position: absolute;
  left: -3px;
  top: 81px;
  display: flex;
  gap: 114px;
}
.dots i { width: 6px; height: 6px; flex: none; background: rgba(255, 255, 255, 0.32); }

.window {
  position: absolute;
  left: 18px;
  top: 44px;
  width: 2840px;
  height: 1960px;
  border-radius: 10px 10px 14px 14px;
  overflow: hidden;
  display: flex;
  flex-direction: column;
  background: #ececec;
  box-shadow: 0 0 3px rgba(0, 0, 0, 0.5), 0 14px 44px rgba(0, 0, 0, 0.42);
}
.titlebar {
  height: 44px;
  box-sizing: border-box;
  flex: none;
  display: flex;
  align-items: center;
  background: #f6f6f6;
  border-bottom: 2px solid #d3d3d3;
}
.lights { display: flex; gap: 16px; margin-left: 16px; width: 104px; }
.lights i { width: 24px; height: 24px; box-sizing: border-box; border-radius: 50%; background: #dcdcdc; border: 1px solid #cbcbcb; }
.wtitle {
  margin: 3px 0 0 892px;
  font: 25px/40px Inter, 'Liberation Sans', sans-serif;
  letter-spacing: 0.270px;
  color: #b2b2b2;
  white-space: nowrap;
}
.stage {
  flex: none;
  height: 1874px;
  box-sizing: border-box;
  padding: 38px 0 0 220px;
  background: linear-gradient(90deg, #d0d0d0, #e0e0e0 16px, #e9e9e9 40px, #ececec 80px);
}
.status {
  height: 42px;
  flex: none;
  box-sizing: border-box;
  display: flex;
  align-items: center;
  justify-content: flex-end;
  gap: 10px;
  padding-right: 25px;
  border-top: 1px solid #7f7f7f;
  background: linear-gradient(180deg, #f8f8f8, #dedede);
}
.status svg { flex: none; }
.host {
  width: 80px;
  font: 500 26px/40px Inter, 'DejaVu Sans', sans-serif;
  color: #111;
  white-space: nowrap;
}

.vm {
  position: relative;
  zoom: 3;
  width: 800px;
  height: 600px;
  overflow: hidden;
  display: flex;
  flex-direction: column;
  font: 13px/19.5px 'Liberation Sans', Arial, sans-serif;
  color: #3c3c3c;
  background: #fff;
}
.vm svg { display: block; flex: none; }
.panel {
  height: 24px;
  flex: none;
  display: flex;
  align-items: center;
  background: linear-gradient(180deg, #65625a 0, #5b584d 1px, #3d3c38);
  color: #dfdbd2;
  font: 14px/24px 'Noto Sans', sans-serif;
  white-space: nowrap;
}
.ptitle { width: 568px; box-sizing: border-box; padding-left: 6.200px; margin-top: -0.700px; font-weight: 700; flex: none; letter-spacing: 0.145px; text-shadow: 0 0 1px #2c2b28; }
.p-net { margin-left: 6px; }
.p-sv {
  width: 20px;
  height: 20px;
  flex: none;
  margin-left: 12px;
  border-radius: 1.5px;
  background: #dfdbd2;
  color: #454440;
  text-align: center;
  font: 600 13px/21px 'Noto Sans', sans-serif;
  letter-spacing: -0.800px;
}
.p-bat { margin-left: 12px; }
.p-vol { margin-left: 10.500px; }
.p-clock { margin-left: 16px; width: 64.500px; margin-top: -0.500px; }
.vbody { display: flex; flex: none; height: 576px; }

.launcher {
  width: 49px;
  height: 576px;
  box-sizing: border-box;
  flex: none;
  display: flex;
  flex-direction: column;
  gap: 5px;
  padding: 5px 0 0 5px;
  border-right: 1px solid #232045;
  background: linear-gradient(180deg, #040e2b, #071742 8px);
}
.slot {
  position: relative;
  width: 38px;
  height: 38px;
  box-sizing: border-box;
  flex: none;
  border: 0.700px solid rgba(190, 196, 215, 0.16);
  border-radius: 3px;
  background:
    radial-gradient(ellipse 26px 15px at 50% 0, rgba(214, 218, 230, 0.75), rgba(180, 186, 205, 0.35) 60%, transparent) padding-box,
    linear-gradient(180deg, rgba(255, 255, 255, 0.14), rgba(255, 255, 255, 0) 40%, rgba(255, 255, 255, 0) 55%, rgba(255, 255, 255, 0.14)) padding-box;
  background-clip: padding-box;
  box-shadow: 0 0 2px rgba(0, 0, 0, 0.4);
}
.slot .app { margin: -0.700px; }
.slot.dash { background-color: #14308a; }
.slot.firefox { background-color: #a4653c; }
.slot.settings { background-color: #a8343e; }
.slot.terminal { background-color: #8d8f9a; }
.slot.trash { margin-top: 55px; }
.slot.writer .doc { fill: #07608f; }
.slot.calc .doc { fill: #1c9006; }
.slot.impress .doc { fill: #93400e; }
.a-letter {
  position: absolute;
  left: -0.700px;
  width: 38px;
  top: -1.200px;
  text-align: center;
  font: 700 23px/30px 'Open Sans', 'Noto Sans', sans-serif;
  color: #242424;
}
.run, .foc { position: absolute; top: 15.300px; width: 4px; height: 6px; background: #dcdce2; }
.run { left: -5.700px; clip-path: polygon(0 0, 100% 50%, 0 100%); }
.foc { right: -5.700px; clip-path: polygon(100% 0, 0 50%, 100% 100%); }
.defs { position: absolute; }

.browser { flex: none; width: 751px; display: flex; flex-direction: column; }
.tabs {
  height: 30px;
  flex: none;
  display: flex;
  align-items: center;
  background: #3c3b37;
  box-shadow: inset 0 -1px 0 #2a2926;
}
.tab {
  position: relative;
  width: 238px;
  height: 30px;
  margin-left: 1px;
  display: flex;
  align-items: center;
  flex: none;
  font: 14px/30px 'Noto Sans', sans-serif;
  white-space: nowrap;
}
.tabshape { position: absolute; left: 0; top: 0; }
.fav, .ttext, .tclose { position: relative; }
.fav { margin-left: 23px; margin-top: 2px; }
.ttext { margin-left: 6.200px; width: 159.800px; margin-top: 1.400px; letter-spacing: 0.160px; color: #4a4a48; }
.tclose { margin-left: 0; margin-top: 2px; }
.plus { margin: 2px 0 0 -4px; }
.navbar {
  height: 41px;
  box-sizing: border-box;
  flex: none;
  display: flex;
  align-items: center;
  border-bottom: 1px solid #b3b0aa;
  background: linear-gradient(180deg, #f7f7f6, #f0efee);
  font: 14px/22px 'Noto Sans', sans-serif;
}
.back {
  width: 32px;
  height: 32px;
  box-sizing: border-box;
  margin-left: 4px;
  border-radius: 50%;
  border: 1px solid #aab4bd;
  background: #fbfbfa;
  display: flex;
  align-items: center;
  justify-content: center;
  position: relative;
  z-index: 1;
  flex: none;
}
.url {
  width: 378px;
  height: 24px;
  box-sizing: border-box;
  flex: none;
  margin-left: -5px;
  padding-left: 10.500px;
  border: 1px solid #b3b0aa;
  border-radius: 2px;
  background: #fff;
  display: flex;
  align-items: center;
  color: #999;
}
.url em { font-style: normal; color: #3c3c3c; }
.vsep { width: 1px; height: 16px; background: #d2d2d2; flex: none; }
.lock { margin-right: 7.500px; }
.utext { margin: 0.800px 0 0 4.900px; width: 292.100px; white-space: nowrap; flex: none; letter-spacing: 0.330px; }
.drop { margin-right: 8.500px; margin-top: 2px; }
.reload { margin-left: 8.700px; }
.sbox {
  width: 142px;
  height: 24px;
  box-sizing: border-box;
  flex: none;
  margin-left: 7px;
  padding-left: 4px;
  border: 1px solid #b3b0aa;
  border-radius: 2px;
  background: #fff;
  display: flex;
  align-items: center;
  color: #9a9a98;
}
.sbox span { margin: 0.800px 0 0 4px; letter-spacing: 0.150px; }
.n-star { margin-left: 13.500px; }
.n-s1 { margin-left: 6.500px; height: 18px; background: #cfd0d1; }
.n-clip { margin-left: 8px; }
.n-pocket { margin-left: 23px; }
.n-more { margin-left: 25px; }
.n-s2 { margin-left: 14px; width: 1px; height: 36px; background: linear-gradient(180deg, transparent, #c9c8c6 40%, #c9c8c6 60%, transparent); }
.n-menu { margin-left: 13px; margin-top: -1px; }

.frames { height: 505px; flex: none; display: flex; overflow: hidden; background: #fff; }
.left { width: 217px; flex: none; box-sizing: border-box; padding: 8px 0 0 8px; }
.lbox {
  width: 201px;
  height: 520px;
  box-sizing: border-box;
  border: 1px solid #d9d9d9;
  box-shadow: inset 0 0 0 1px #fff;
  background: #f5f5f5;
  padding-left: 9px;
}
.login { padding-top: 6.250px; height: 25.750px; }
.lbox hr { margin: 0 0 8px 5px; border: 0; width: 171px; height: 1px; background: #d9d9d9; }
.cat { height: 25px; line-height: 25px; display: flex; color: #000; }
.cat .right { margin: 4px 0 0 2px; width: 7px; }
.cat .down { margin: 7px 0 0 -1px; }
.cat .right + span { margin-left: 8.900px; }
.cat .down + span { margin-left: 4.900px; }
.links { list-style: none; margin: -0.700px 0 0.700px; padding: 0 0 0 16.100px; }
.links li { height: 20.810px; line-height: 20.810px; color: #124ab4; white-space: nowrap; }
.find { display: flex; }
.find span { margin-top: 1px; width: 50px; }
.field {
  box-sizing: border-box;
  flex: none;
  border: 1px solid #aeaaa4;
  border-radius: 2.500px;
  background: #fff;
  box-shadow: inset 0 1px 0 #f0efee;
  padding-left: 2.100px;
  white-space: nowrap;
}
.find .field { width: 136px; height: 21px; }

.sb {
  width: 13px;
  flex: none;
  box-sizing: border-box;
  height: 505px;
  display: flex;
  flex-direction: column;
  background: linear-gradient(90deg, #d5d4d1, #e4e3e1);
  border: solid #c5c2be;
  border-width: 0 1px;
  border-radius: 7px;
}
.sbtn { height: 17px; flex: none; background: #f3f3f2; border: 1px solid #c5c2be; border-width: 1px 0 0; border-radius: 6px 6px 0 0; box-sizing: border-box; display: flex; justify-content: center; align-items: flex-start; padding-top: 5px; }
.sbtn.low { height: 13px; margin-top: auto; border-width: 0 0 1px; border-radius: 0 0 6px 6px; padding-top: 4px; }
.thumb {
  margin: -4px -1px 0;
  padding-bottom: 2px;
  flex: none;
  box-sizing: border-box;
  border: 1px solid #96948f;
  border-radius: 6px;
  background: linear-gradient(90deg, #f3f3f1, #fbfbfa 30%, #e3e2e0 75%, #eeedec);
  display: flex;
  flex-direction: column;
  align-items: center;
  justify-content: center;
  gap: 2px;
}
.thumb i { width: 3px; height: 1px; background: #a4a29e; box-shadow: 0 1px 0 #fff; }
.sb-left .thumb { height: 375px; }
.sb-right .thumb { height: 362px; }

.main { width: 508px; flex: none; box-sizing: border-box; padding-left: 8px; }
.head { height: 51px; display: flex; box-sizing: border-box; color: #124ab4; line-height: 15px; padding-top: 8px; width: 492.300px; white-space: nowrap; }
.mi { width: 140.200px; margin-left: -0.100px; flex: none; }
.head h1 { margin: 0; font-size: 24px; line-height: 28px; margin-top: 0.600px; font-weight: 400; letter-spacing: -0.040px; color: #3c3c3c; }
.sbind { margin-left: auto; letter-spacing: 0.120px; }
.form { width: 492px; box-sizing: border-box; border: 1px solid #d9d9d9; padding: 1px; background: #f5f5f5; box-shadow: inset 0 0 0 1px #fff; height: 460px; }
.fhead { height: 20px; line-height: 19.500px; padding-left: 3px; margin-bottom: 3.750px; font-weight: 700; background: #d0defc; }
.frow { display: flex; white-space: nowrap; }
.frow label { width: 103.200px; padding-top: 0.400px; text-align: right; font-weight: 700; flex: none; }
.frow .wide { letter-spacing: 0.110px; }
.frow .l2 { width: 107.900px; }
.val { margin-left: 7.700px; }
.half { width: 111px; flex: none; }
.h35 { height: 35px; }
.h47 { height: 47px; }
.h55 { height: 55px; }
.h65 { height: 65px; }
.h66 { height: 66px; }
.h67 { height: 67px; }
.ln { display: flex; align-items: flex-start; height: 19.500px; }
.ln.d4 { margin-top: 4px; }
.ln.d19 { margin-top: 19px; }
.ln.d20 { margin-top: 20px; }
.ln span { margin: 0.400px 0 0 4.900px; }
.radio { width: 12px; height: 12px; flex: none; box-sizing: border-box; margin: 1.250px 0 0 1.100px; border: 1px solid #a19d97; border-bottom-color: #bdb9b3; border-radius: 50%; background: #fff; }
.radio.nx { margin-left: 5.300px; }
.half .radio.nx { margin-left: 6px; }
.radio.on { border-color: #c3562d; background: radial-gradient(circle at 50% 50%, #6f3b2a 0 1.500px, #f39068 2.200px 3px, #ee7746 3.600px); }
.auto { letter-spacing: 0.110px; }
.rev { letter-spacing: 0.080px; }
.under { margin-top: -0.100px; }
.under.m2 { margin-top: 3.900px; letter-spacing: 0.040px; }
.field.dom { width: 336px; height: 26px; line-height: 25.400px; margin: 6.250px 0 0 1.100px; }
.field.dis { width: 256px; height: 25px; margin: -2.750px 0 0 6px; background: #ebeae9; border-color: #cfccc8; box-shadow: none; }
.btn {
  width: 24px;
  height: 28px;
  box-sizing: border-box;
  margin: 4.750px 0 0 1.100px;
  border: 1px solid #bfbbb6;
  border-bottom-color: #a9a59f;
  border-radius: 3px;
  background: linear-gradient(180deg, #fff, #ebeae8);
  text-align: center;
  line-height: 25px;
}
.field.mas { width: 256px; height: 25px; line-height: 24px; margin: -2.750px 0 0 1.100px; }
.check { margin: 0.250px 0 0 6px; }
.ln .ns { margin-left: 2.100px; }
.field.mail { width: 336px; height: 25px; margin: 1.250px 0 0 1.100px; }
.field.ip { width: 136px; height: 25px; margin: 17.250px 0 0 1.100px; }
.field.num { width: 80px; height: 26px; line-height: 24px; margin: 1.250px 0 0 1.100px; }
.select {
  width: 78px;
  height: 28px;
  box-sizing: border-box;
  margin: 2px 0 0 1.100px;
  padding: 0 5.500px 0 5.200px;
  border: 1px solid #bfbbb6;
  border-radius: 3px;
  background: linear-gradient(180deg, #fff, #ececea 60%);
  display: flex;
  justify-content: space-between;
  line-height: 20px;
  color: #4c4c4c;
}
.select svg { margin-top: 5px; }

.tip { position: absolute; left: 43px; top: 421.200px; width: 118px; height: 26px; filter: drop-shadow(0 1px 7px rgba(0, 0, 0, 0.75)); }
.tip span { position: absolute; left: 36px; top: 0; color: #fff; font: 14px/26px 'Noto Sans', sans-serif; letter-spacing: 0.150px; }
</style>
